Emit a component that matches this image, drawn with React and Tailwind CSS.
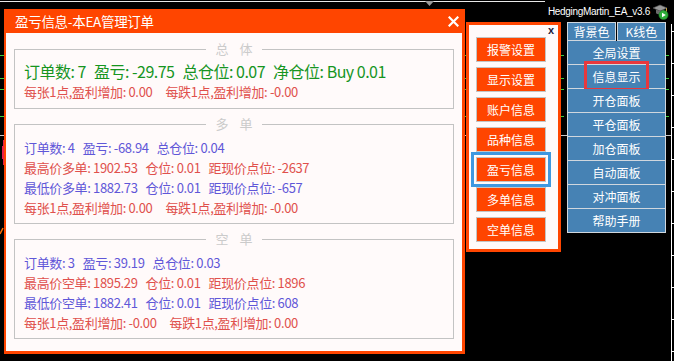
import React from 'react'

const FONT = "font-['Noto_Sans_CJK_SC',sans-serif]"
const GREEN = 'text-[#16951f]'
const BLUE = 'text-[#5f57d8]'
const RED = 'text-[#e0504c]'

const sideButtons = ['报警设置', '显示设置', '账户信息', '品种信息', '盈亏信息', '多单信息', '空单信息']
const panelRows = ['全局设置', '信息显示', '开仓面板', '平仓面板', '加仓面板', '自动面板', '对冲面板', '帮助手册']

function Line({ items, color, gap = 'gap-[8px]', size = 'text-[13px] leading-[20px] tracking-[-0.35px]' }) {
  return (
    <div className={`flex whitespace-pre ${gap} ${size} ${color}`}>
      {items.map((t) => (
        <span key={t}>{t}</span>
      ))}
    </div>
  )
}

function Group({ a, b, children, body = 'pt-[6px] pb-[5px]' }) {
  return (
    <fieldset className={`border border-[#c3c3c3] px-[9px] ${body}`}>
      <legend className="mx-auto px-[9px] text-[13px] leading-[16px] text-[#cbcbcb]">
        {a}
        <span className="ml-[11px]">{b}</span>
      </legend>
      {children}
    </fieldset>
  )
}

function ChartBackdrop() {
  const ticks = [31, 63, 95, 127, 159, 191, 223, 255, 287, 319, 351]
  return (
    <svg className="absolute inset-0" width="674" height="361" viewBox="0 0 674 361">
      <line x1="0" y1="1.5" x2="545" y2="1.5" stroke="#e8e8e8" />
      <path d="M425 1 L434 1 L429.5 6 Z" fill="#9a9a9a" />
      {[55, 78, 89, 116].map((y) => (
        <line key={y} x1="0" y1={y + 0.5} x2="671" y2={y + 0.5} stroke="#3ccf3c" strokeDasharray="4 3" />
      ))}
      <line x1="0" y1="135.5" x2="671" y2="135.5" stroke="#c8c8c8" />
      <line x1="3.5" y1="140" x2="3.5" y2="165" stroke="#e8204a" />
      <rect x="2" y="146" width="3" height="13" fill="#e8204a" />
      <line x1="0" y1="234" x2="3" y2="228" stroke="#ff6a00" strokeWidth="1.5" />
      <line x1="671.5" y1="24" x2="671.5" y2="361" stroke="#ffffff" />
      {ticks.map((y) => (
        <line key={y} x1="671" y1={y + 0.5} x2="674" y2={y + 0.5} stroke="#ffffff" />
      ))}
    </svg>
  )
}

function EaIcon() {
  return (
    <svg width="17" height="17" viewBox="0 0 17 17">
      <path d="M1 5 L8 2 L15 5 L8 8 Z" fill="#9a9a9a" stroke="#555" strokeWidth="0.6" />
      <path d="M4 6.5 V10 C4 11.8 12 11.8 12 10 V6.5 L8 8 Z" fill="#6b6b6b" />
      <line x1="14.5" y1="5" x2="14.5" y2="9" stroke="#c8a040" />
      <circle cx="11.5" cy="12" r="4.6" fill="#2fae3a" stroke="#1c7a25" strokeWidth="0.6" />
      <path d="M10 9.7 L13.8 12 L10 14.3 Z" fill="#fff" />
    </svg>
  )
}

export default function App() {
  return (
    <div className={`relative h-[361px] w-[674px] overflow-hidden bg-black ${FONT}`}>
      <ChartBackdrop />

      <div className="relative flex items-start pl-[4px]">
        {/* main info window */}
        <div className="mt-[9px] w-[461px] bg-[#ff4500] pl-[2px] pr-[3px] pb-[3px]">
          <div className="flex h-[24px] items-center justify-between pl-[9px] pr-[3px]">
            <span className="text-[13.5px] leading-[24px] tracking-[-0.3px] text-white">盈亏信息-本EA管理订单</span>
            <svg width="11" height="11" viewBox="0 0 11 11">
              <path d="M1.5 1.5 L9.5 9.5 M9.5 1.5 L1.5 9.5" stroke="#fff" strokeWidth="2.2" strokeLinecap="square" />
            </svg>
          </div>

          <div className="flex flex-col gap-[7px] bg-[#fffafa] px-[8px] pt-[8px] pb-[12px]">
            <Group a="总" b="体" body="pt-[3px] pb-[6px]">
              <Line
                color={GREEN}
                gap="gap-[8px]"
                size="text-[16px] leading-[22px] tracking-[-0.5px]"
                items={['订单数: 7', '盈亏: -29.75', '总仓位: 0.07', '净仓位: Buy 0.01']}
              />
              <Line color={RED} gap="gap-[13px]" items={['每张1点,盈利增加: 0.00', '每跌1点,盈利增加: -0.00']} />
            </Group>

            <Group a="多" b="单">
              <Line color={BLUE} items={['订单数: 4', '盈亏: -68.94', '总仓位: 0.04']} />
              <Line color={RED} items={['最高价多单: 1902.53', '仓位: 0.01', '距现价点位: -2637']} />
              <Line color={BLUE} items={['最低价多单: 1882.73', '仓位: 0.01', '距现价点位: -657']} />
              <Line color={RED} gap="gap-[13px]" items={['每张1点,盈利增加: 0.00', '每跌1点,盈利增加: -0.00']} />
            </Group>

            <Group a="空" b="单">
              <Line color={BLUE} items={['订单数: 3', '盈亏: 39.19', '总仓位: 0.03']} />
              <Line color={RED} items={['最高价空单: 1895.29', '仓位: 0.01', '距现价点位: 1896']} />
              <Line color={BLUE} items={['最低价空单: 1882.41', '仓位: 0.01', '距现价点位: 608']} />
              <Line color={RED} gap="gap-[13px]" items={['每张1点,盈利增加: -0.00', '每跌1点,盈利增加: 0.00']} />
            </Group>
          </div>
        </div>

        {/* info menu */}
        <div className="mt-[22px] ml-[1px] w-[95px] border-[3px] border-[#ff4500] bg-[#fffafa] pl-[7px] pb-[7px]">
          <div className="flex h-[12px] items-start justify-end pr-[4px]">
            <span className="font-['Liberation_Sans',sans-serif] text-[11px] font-bold leading-[10px] text-[#1b1b3a]">x</span>
          </div>
          <div className="flex flex-col gap-[5px]">
            {sideButtons.map((label) => (
              <div
                key={label}
                className={`flex h-[25px] w-[70px] items-center justify-center border border-[#c4c4c4] bg-[#ff4500] text-[12px] text-white ${
                  label === '盈亏信息' ? 'outline-3 outline-offset-2 outline-[#3f98e0]' : ''
                }`}
              >
                {label}
              </div>
            ))}
          </div>
        </div>

        {/* EA control column */}
        <div className="ml-[6px] flex w-[99px] flex-col items-end">
          <div className="-mr-[3px] flex h-[22px] items-center gap-[2px] whitespace-nowrap pt-[1px]">
            <span className="font-['Liberation_Sans',sans-serif] text-[10px] tracking-[-0.3px] text-white">HedgingMartin_EA_v3.6</span>
            <EaIcon />
          </div>
          <div className="flex w-full flex-col text-[12px] text-white">
            <div className="flex h-[19px] gap-px">
              <div className="flex flex-1 items-center justify-center border border-[#d0d7de] bg-[#4682b4]">背景色</div>
              <div className="flex flex-1 items-center justify-center border border-[#d0d7de] bg-[#4682b4]">K线色</div>
            </div>
            {panelRows.map((label) => (
              <div
                key={label}
                className="relative flex h-[24px] items-center justify-center border-x border-b border-[#d0d7de] bg-[#4682b4]"
              >
                {label}
                {label === '信息显示' && (
                  <div className="absolute top-[-4px] left-[16px] h-[30px] w-[65px] border-[3px] border-[#e8383d]" />
                )}
              </div>
            ))}
          </div>
        </div>
      </div>
    </div>
  )
}
